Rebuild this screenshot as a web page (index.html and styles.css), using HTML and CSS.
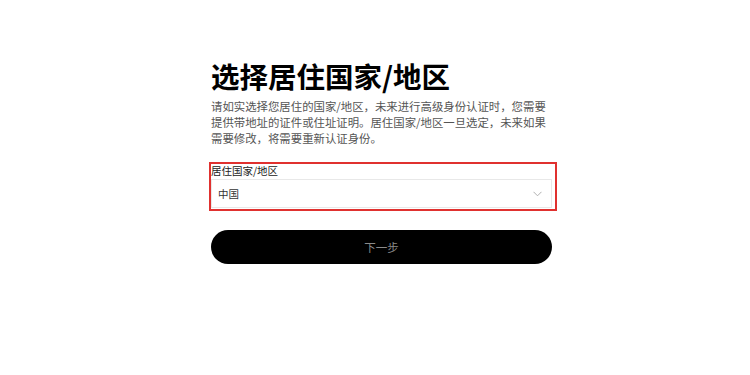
FILE: index.html
```html
<!DOCTYPE html>
<html lang="zh-CN">
<head>
<meta charset="utf-8">
<title>选择居住国家/地区</title>
<link rel="stylesheet" href="styles.css">
</head>
<body>
<main class="page">
  <h1 class="title">选择居住国家/地区</h1>
  <p class="desc">请如实选择您居住的国家/地区，未来进行高级身份认证时，您需要提供带地址的证件或住址证明。居住国家/地区一旦选定，未来如果需要修改，将需要重新认证身份。</p>
  <div class="field">
    <div class="label">居住国家/地区</div>
    <div class="select">
      <span class="value">中国</span>
      <svg class="chev" width="9" height="6" viewBox="0 0 9 6"><path d="M0.5 0.8 L4.5 4.8 L8.5 0.8" fill="none" stroke="#b0b0b0" stroke-width="1"/></svg>
    </div>
  </div>
  <button class="next">下一步</button>
</main>
</body>
</html>
```
FILE: styles.css
```css
html, body {
  margin: 0;
  padding: 0;
  background: #fff;
}
body {
  font-family: "Noto Sans CJK SC", "Noto Sans", sans-serif;
  color: #111;
}
.page {
  display: flex;
  flex-direction: column;
  width: 341px;
  padding: 59px 0 0 211px;
}
.title {
  margin: 0;
  font-size: 28.5px;
  line-height: 34px;
  font-weight: 700;
  color: #000;
}
.desc {
  margin: 5px 0 0;
  font-size: 11.4px;
  line-height: 16px;
  color: #555;
}
.field {
  margin: 16px 0 0 -2px;
  width: 341px;
  border: 2px solid #e0312f;
  padding: 0 3px 1px 0;
}
.label {
  font-size: 10.5px;
  line-height: 14px;
  color: #222;
}
.select {
  margin-top: 1px;
  height: 29px;
  box-sizing: border-box;
  border: 1px solid #e8e8e8;
  display: flex;
  align-items: center;
  justify-content: space-between;
  padding: 0 9px 0 6px;
}
.value {
  font-size: 10.5px;
  color: #333;
}
.chev {
  display: block;
}
.next {
  margin-top: 19px;
  height: 34px;
  width: 341px;
  border: none;
  border-radius: 17px;
  background: #000;
  color: #8a8a8a;
  font-family: "Noto Sans CJK SC", "Noto Sans", sans-serif;
  font-size: 11.5px;
  padding: 0;
}
```
